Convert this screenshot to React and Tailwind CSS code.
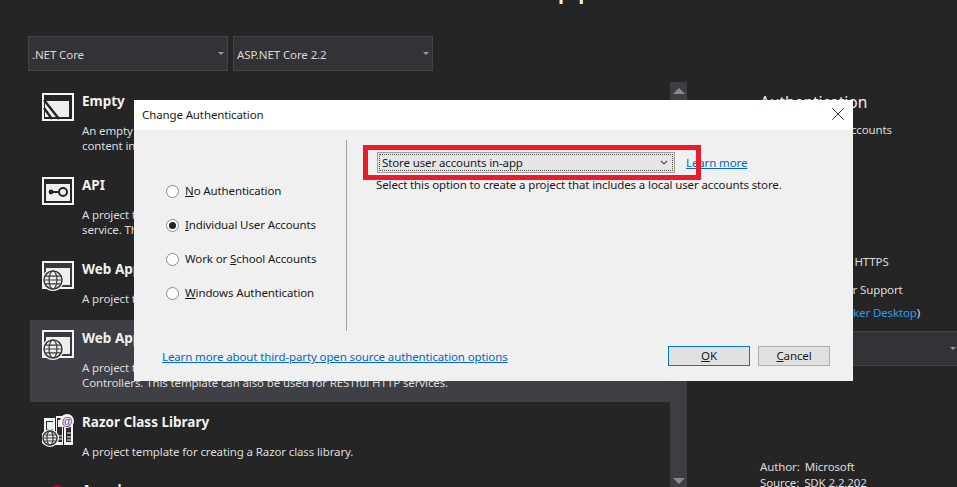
import { X } from "lucide-react";

const ui = "font-['Noto_Sans',sans-serif]";
// Noto runs wider than the picture's font, so small text is pulled in a bit
const small = "text-[11.5px] tracking-[-0.12px]";

function Frame({ children }) {
    return (
        <svg width="32" height="28" viewBox="0 0 32 28" className="shrink-0">
            <rect x="1" y="1" width="30" height="26" fill="#252526" stroke="#f5f5f5" strokeWidth="2" />
            {children}
        </svg>
    );
}

function Globe({ cx = 11, cy = 19, r = 9 }) {
    return (
        <g fill="none" stroke="#3a3a3c" strokeWidth="1.2">
            <circle cx={cx} cy={cy} r={r + 1.5} fill="#f5f5f5" stroke="none" />
            <circle cx={cx} cy={cy} r={r - 0.5} fill="#eeeeee" strokeWidth="1.5" />
            <ellipse cx={cx} cy={cy} rx={r / 2.4} ry={r - 0.5} />
            <path d={`M${cx - r + 1} ${cy}H${cx + r - 1}M${cx - r + 2} ${cy - r / 2.5}H${cx + r - 2}M${cx - r + 2} ${cy + r / 2.5}H${cx + r - 2}`} />
        </g>
    );
}

function EmptyIcon() {
    return (
        <Frame>
            <path d="M3 8H27V24H3Z" fill="#eeeeee" />
            <path d="M2 7L17 26M2 15L10 26" stroke="#252526" strokeWidth="2.4" />
        </Frame>
    );
}

function ApiIcon() {
    return (
        <Frame>
            <path d="M4 7H28V24H4Z" fill="#eeeeee" />
            <circle cx="9" cy="15" r="2.4" fill="#252526" />
            <path d="M9 15H16" stroke="#252526" strokeWidth="2" />
            <circle cx="21" cy="15" r="4" fill="none" stroke="#252526" strokeWidth="2" />
        </Frame>
    );
}

function WebIcon() {
    return (
        <svg width="32" height="31" viewBox="0 0 32 31" className="shrink-0">
            <rect x="1" y="1" width="30" height="26" fill="#3a3a3c" stroke="#f5f5f5" strokeWidth="2" />
            <path d="M4 7H28V24H4Z" fill="#eeeeee" />
            <Globe cx={11} cy={19} r={9.5} />
        </svg>
    );
}

function RazorIcon() {
    return (
        <svg width="32" height="33" viewBox="0 0 32 33" className="shrink-0">
            <path d="M2 4H13V31H2Z" fill="#f5f5f5" />
            <path d="M14 2H21V31H14Z" fill="#f5f5f5" />
            <path d="M22 5H31V31H22Z" fill="#f5f5f5" />
            <path d="M4 7H11V28H4ZM15 4H20V28H15ZM24 8H29V28H24Z" fill="#2a2a2c" />
            <path d="M5 8H11V15H5Z" fill="#eeeeee" />
            <path d="M16 6H20V13H16Z" fill="#eeeeee" />
            <path d="M25 19H29M25 23H29M25 26H29M15 22H20M15 25H20" stroke="#eeeeee" strokeWidth="1.2" />
            <Globe cx={8} cy={24} r={7.5} />
            <circle cx="25" cy="7" r="7" fill="#f5f5f5" />
            <text x="25" y="11" textAnchor="middle" fontSize="11" fontWeight="700" fill="#6b3fa8" fontFamily="Liberation Sans, sans-serif">@</text>
        </svg>
    );
}

function AngularIcon() {
    return (
        <svg width="32" height="28" viewBox="0 0 32 28" className="shrink-0">
            <path d="M15 3L24 6L22.5 20L15 25L7.5 20L6 6Z" fill="#c3002f" />
        </svg>
    );
}

function Caret({ up }) {
    return (
        <span className={`w-0 h-0 border-x-[6px] border-x-transparent ${up ? "border-b-[6px] border-b-[#8a8a8c]" : "border-t-[6px] border-t-[#8a8a8c]"}`} />
    );
}

function DarkSelect({ label, className }) {
    return (
        <div className={`h-[35px] bg-[#333337] border border-[#434346] flex items-center justify-between pl-[3px] pr-[3px] text-[11.5px] tracking-[-0.1px] text-[#d8d8d8] ${className}`}>
            <span className="pt-[2px]">{label}</span>
            <span className="w-0 h-0 border-x-[3px] border-x-transparent border-t-[3px] border-t-[#9a9a9a]" />
        </div>
    );
}

const templates = [
    { name: "Empty", icon: EmptyIcon, h: "h-[84px]", pt: "pt-[9px]", lines: ["An empty project template for creating an ASP.NET Core application. This template does not have any", "content in it."] },
    { name: "API", icon: ApiIcon, h: "h-[84px]", pt: "pt-[9px]", lines: ["A project template for creating an ASP.NET Core application with an example Controller for a RESTful HTTP", "service. This template can also be used for ASP.NET Core MVC Views and Controllers."] },
    { name: "Web Application", icon: WebIcon, h: "h-[69px]", pt: "pt-[9px]", lines: ["A project template for creating an ASP.NET Core application with example ASP.NET Razor Pages content."] },
    { name: "Web Application (Model-View-Controller)", icon: WebIcon, h: "h-[82px]", pt: "pt-[9px]", selected: true, lines: ["A project template for creating an ASP.NET Core application with example ASP.NET Core MVC Views and", "Controllers. This template can also be used for RESTful HTTP services."] },
    { name: "Razor Class Library", icon: RazorIcon, h: "h-[69px]", pt: "pt-[11px]", lines: ["A project template for creating a Razor class library."] },
    { name: "Angular", icon: AngularIcon, h: "h-[16px]", pt: "pt-[10px]", lines: [] },
];

function TemplateRow({ item }) {
    const Icon = item.icon;
    return (
        <div className={`${item.h} ${item.pt} shrink-0 flex gap-[8px] pl-[12px] overflow-hidden ${item.selected ? "bg-[#3f3f46]" : ""}`}>
            <div className="w-[32px] pt-px">
                <Icon />
            </div>
            <div className="whitespace-nowrap">
                <div className="text-[13.5px] leading-[18px] font-bold text-[#f1f1f1]">{item.name}</div>
                <div className={`mt-[13px] leading-[15px] text-[#dcdcdc] ${small}`}>
                    {item.lines.map((l) => (
                        <div key={l}>{l}</div>
                    ))}
                </div>
            </div>
        </div>
    );
}

function Radio({ children, checked }) {
    return (
        <div className={`h-[34px] flex items-center gap-[6px] text-[#1a1a1a] ${small}`}>
            <span className="w-[13px] h-[13px] rounded-full border border-[#8a8a8a] bg-white flex items-center justify-center">
                {checked && <span className="w-[7px] h-[7px] rounded-full bg-[#222222]" />}
            </span>
            <span>{children}</span>
        </div>
    );
}

export default function App() {
    return (
        <div className={`${ui} relative w-[957px] h-[487px] overflow-hidden bg-[#252526] flex flex-col`}>
            <div className="h-[36px] overflow-hidden shrink-0">
                <div className="-mt-[34px] ml-[33px] text-[33px] leading-[36px] text-[#f1f1f1] whitespace-nowrap">
                    Create a new ASP.NET Core Web Application
                </div>
            </div>

            <div className="flex gap-[5px] pl-[28px] shrink-0">
                <DarkSelect label=".NET Core" className="w-[200px]" />
                <DarkSelect label="ASP.NET Core 2.2" className="w-[200px]" />
            </div>

            <div className="flex mt-[11px] h-[405px]">
                <div className="w-[640px] ml-[30px] pt-px flex flex-col">
                    {templates.map((t) => (
                        <TemplateRow key={t.name} item={t} />
                    ))}
                </div>
                <div className="w-[17px] bg-[#3e3e42] flex flex-col items-center justify-between pt-[6px] pb-[3px]">
                    <Caret up />
                    <Caret />
                </div>
                <div className={`pl-[74px] flex-1 overflow-hidden text-[#dcdcdc] whitespace-nowrap ${small}`}>
                    <div className="mt-[9px] text-[15.5px] tracking-normal leading-[22px] text-[#f1f1f1] -ml-[1px]">Authentication</div>
                    <div className="mt-[9px] leading-[16px]">Individual User Accounts</div>
                    <div className="mt-[116px] pl-[20px] leading-[16px]">Configure for HTTPS</div>
                    <div className="mt-[12px] pl-[20px] leading-[16px]">Enable Docker Support</div>
                    <div className="mt-[7px] pl-[20px] leading-[16px] -ml-[1px]">
                        (Requires <span className="text-[#2e9be6]">Docker Desktop</span>)
                    </div>
                    <div className="mt-[10px] h-[35px] bg-[#333337] border-y border-[#434346] flex items-center justify-end pr-[1px]">
                        <span className="w-0 h-0 border-x-[3px] border-x-transparent border-t-[3px] border-t-[#9a9a9a]" />
                    </div>
                    <div className="mt-[93px] flex gap-[5px] leading-[16px] -ml-[1px]">
                        <span>Author:</span>
                        <span>Microsoft</span>
                    </div>
                    <div className="flex gap-[5px] leading-[16px] -ml-[1px]">
                        <span>Source:</span>
                        <span>SDK 2.2.202</span>
                    </div>
                </div>
            </div>

            <div className="absolute left-[134px] top-[100px] w-[719px] h-[281px] bg-[#f0f0f0] flex flex-col">
                <div className={`h-[30px] bg-white shrink-0 flex items-center justify-between pl-[8px] pr-[4px] text-[#1a1a1a] ${small}`}>
                    <span>Change Authentication</span>
                    <X size={22} strokeWidth={0.9} color="#111111" className="-mt-[2px]" />
                </div>
                <div className="flex mt-[10px] h-[191px] shrink-0">
                    <div className="w-[213px] border-r border-[#a0a0a0] pl-[32px] pt-[34px]">
                        <Radio><u>N</u>o Authentication</Radio>
                        <Radio checked><u>I</u>ndividual User Accounts</Radio>
                        <Radio>Work or <u>S</u>chool Accounts</Radio>
                        <Radio><u>W</u>indows Authentication</Radio>
                    </div>
                    <div className={`pl-[29px] pt-[12px] text-[#1a1a1a] ${small}`}>
                        <div className="flex items-center">
                            <div className="ml-px w-[298px] h-[21px] border border-[#a0a0a0] bg-[#e6e6e6] p-px">
                                <div className="h-full border border-dotted border-[#555555] flex items-center justify-between pl-[2px] pr-[4px]">
                                    <span className="pt-px">Store user accounts in-app</span>
                                    <svg width="8" height="5" viewBox="0 0 8 5">
                                        <path d="M1 1L4 4L7 1" fill="none" stroke="#555555" strokeWidth="1.2" />
                                    </svg>
                                </div>
                            </div>
                            <a className="ml-[11px] pt-px text-[#0066cc] underline">Learn more</a>
                        </div>
                        <div className="mt-[4px] leading-[16px]">Select this option to create a project that includes a local user accounts store.</div>
                    </div>
                </div>
                <div className={`flex items-center justify-between pl-[28px] pr-[23px] mt-[15px] ${small}`}>
                    <a className="pt-[2px] text-[#0066cc] underline">Learn more about third-party open source authentication options</a>
                    <div className="flex gap-[8px] text-[#1a1a1a]">
                        <button className="w-[82px] h-[20px] bg-[#e1e1e1] border border-[#0078d7] leading-none"><u>O</u>K</button>
                        <button className="w-[72px] h-[20px] bg-[#e1e1e1] border border-[#adadad] leading-none"><u>C</u>ancel</button>
                    </div>
                </div>
                <div className="absolute left-[229px] top-[45px] w-[338px] h-[35px] border-[5px] border-[#e81c2a]" />
            </div>
        </div>
    );
}
